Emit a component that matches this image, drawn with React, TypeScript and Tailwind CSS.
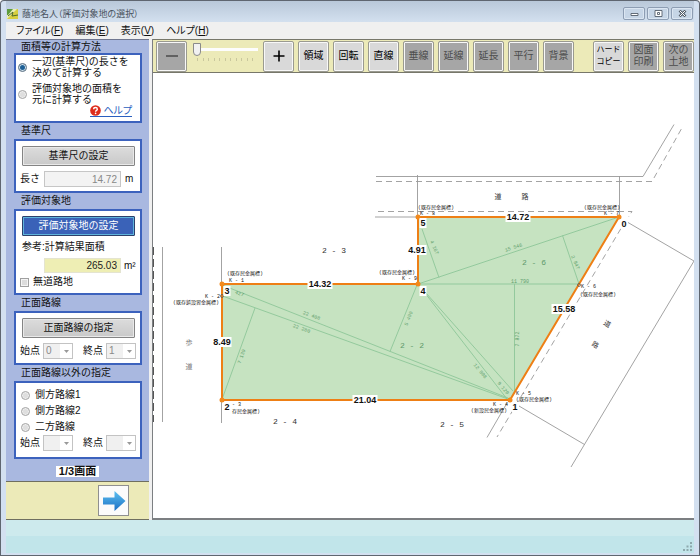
import React, { useState } from "react";

const actions = [
  { label: "領域", on: true },
  { label: "回転", on: true },
  { label: "直線", on: true },
  { label: "垂線", on: false },
  { label: "延線", on: false },
  { label: "延長", on: false },
  { label: "平行", on: false },
  { label: "背景", on: false },
];

const menus = [
  { label: "ファイル", key: "F" },
  { label: "編集", key: "E" },
  { label: "表示", key: "V" },
  { label: "ヘルプ", key: "H" },
];

function ToolButton({ on, children, className = "text-[10px]" }: { on: boolean; children: React.ReactNode; className?: string }) {
  return (
    <button
      type="button"
      disabled={!on}
      className={`flex h-[31px] w-[31px] shrink-0 items-center justify-center rounded-[2px] border border-[#9a9a90] text-center leading-[12px] shadow-[inset_0_0_0_1px_#f8f8f8] ${
        on ? "bg-[#d9d9d9] text-black" : "bg-[#a6a6a6] text-[#4c4c4c]"
      } ${className}`}
    >
      {children}
    </button>
  );
}

function Section({ title, titleClass = "h-4", boxClass, children }: { title: string; titleClass?: string; boxClass: string; children: React.ReactNode }) {
  return (
    <section className="pr-[7px] pl-2">
      <h2 className={`flex items-center pl-[7px] text-[10px] leading-none ${titleClass}`}>{title}</h2>
      <div className={`border-2 border-[#3c62bd] bg-white px-[6px] ${boxClass}`}>{children}</div>
    </section>
  );
}

function Radio({ name, checked, onChange, children, className }: { name: string; checked: boolean; onChange: () => void; children: React.ReactNode; className: string }) {
  return (
    <label className={`flex items-center ${className}`}>
      <input
        type="radio"
        name={name}
        checked={checked}
        onChange={onChange}
        className="m-0 h-[9px] w-[9px] shrink-0 appearance-none rounded-full border border-[#a8a8a8] bg-[#dedede] shadow-[inset_0_0_0_1px_#efefef] checked:border-[#7b8690] checked:bg-[#1d5f95] checked:shadow-[inset_0_0_0_1px_#d6e6f0]"
      />
      <span>{children}</span>
    </label>
  );
}

function PointSelect({ id, label, value }: { id: string; label: string; value: string }) {
  return (
    <div className="flex items-center gap-[3px]">
      <label htmlFor={id}>{label}</label>
      <span className="relative h-4 w-[30px]">
        <select
          id={id}
          disabled
          defaultValue={value}
          className="block h-4 w-[30px] appearance-none border border-[#c3c3c3] bg-[#f0f0f0] px-[2px] text-[10px] leading-none text-[#8a8a8a] opacity-100"
        >
          <option value={value}>{value}</option>
        </select>
        <span className="pointer-events-none absolute top-px right-px flex h-[14px] w-[12px] items-center justify-center bg-white">
          <svg viewBox="0 0 5 3" className="h-[3px] w-[5px]" aria-hidden="true">
            <path d="M0 0h5L2.500 3z" fill="#999" />
          </svg>
        </span>
      </span>
    </div>
  );
}

function PointRow({ id, start, end }: { id: string; start: string; end: string }) {
  return (
    <div className="-mr-[2px] -ml-[2px] flex h-4 items-center justify-between">
      <PointSelect id={`${id}-start`} label="始点" value={start} />
      <PointSelect id={`${id}-end`} label="終点" value={end} />
    </div>
  );
}

const panelButton =
  "block h-5 w-[113px] rounded-[1px] border border-[#848484] bg-linear-to-b from-[#dcdcdc] to-[#c9c9c9] text-[10px] leading-none shadow-[inset_0_0_0_1px_#e9e9e9]";

function Sidebar() {
  const [method, setMethod] = useState("length");
  const [side, setSide] = useState("");
  return (
    <aside className="flex w-[143px] shrink-0 flex-col border-t border-[#6f7690] text-[10px] leading-none text-[#111]">
      <div className="bg-[#a9b8e0]">
        <Section title="面積等の計算方法" titleClass="h-[13px]" boxClass="h-[70px] pt-px">
          <Radio name="method" checked={method === "length"} onChange={() => setMethod("length")} className="-ml-[4px] gap-[5px] leading-[11px]">
            一辺(基準尺)の長さを
            <br />
            決めて計算する
          </Radio>
          <Radio name="method" checked={method === "area"} onChange={() => setMethod("area")} className="-ml-[4px] mt-[5px] gap-[5px] leading-[11px]">
            評価対象地の面積を
            <br />
            元に計算する
          </Radio>
          <div className="flex h-3 justify-end pr-[2px]">
            <a href="#help" className="flex items-center border-b border-[#2a5fc0] text-[#2a5fc0] [font-feature-settings:'palt']">
              <svg viewBox="0 0 12 12" className="mr-[2px] h-[11px] w-[11px]" aria-hidden="true">
                <circle cx="6" cy="6" r="5.8" fill="#de2c1c" />
                <path d="M4 4.600C4 2 8 2.100 8 4.500 8 5.900 6.100 5.900 6.100 7.300" fill="none" stroke="#fff" strokeWidth="1.500" />
                <circle cx="6.100" cy="9.200" r=".9" fill="#fff" />
              </svg>
              ヘルプ
            </a>
          </div>
        </Section>

        <Section title="基準尺" boxClass="pt-[5px] pb-1">
          <button type="button" className={panelButton}>基準尺の設定</button>
          <div className="mt-[5px] -ml-[2px] flex h-4 items-center">
            <label htmlFor="length" className="w-[24px]">長さ</label>
            <input id="length" disabled defaultValue="14.72" className="h-4 w-[77px] border border-[#c6c6c6] bg-[#f3f3f3] px-[3px] text-right text-[10px] text-[#888]" />
            <span className="pl-1">m</span>
          </div>
        </Section>

        <Section title="評価対象地" boxClass="py-[5px]">
          <button type="button" className="block h-5 w-[113px] rounded-[1px] border border-[#2d3f6b] bg-[#3a62b8] text-[10px] leading-none text-white shadow-[inset_0_0_0_1px_#5fb4dc]">
            評価対象地の設定
          </button>
          <label htmlFor="area" className="mt-[3px] flex h-4 items-center">参考:計算結果面積</label>
          <div className="mt-[3px] -ml-[2px] flex h-[15px] items-center pl-[24px]">
            <input id="area" readOnly defaultValue="265.03" className="h-[15px] w-[77px] border border-[#e4e4d0] bg-[#eeeeb4] px-[3px] text-right text-[10px] text-[#222]" />
            <span className="pl-[3px]">m²</span>
          </div>
          <label className="mt-[3px] -ml-[2px] flex h-[12px] items-center gap-1">
            <input type="checkbox" className="m-0 h-[9px] w-[9px] appearance-none border border-[#a0a0a0] bg-[#dcdcdc] shadow-[inset_0_0_0_1px_#f4f4f4] checked:bg-[#3a62b8]" />
            無道路地
          </label>
        </Section>

        <Section title="正面路線" boxClass="pt-[5px] pb-1">
          <button type="button" className={panelButton}>正面路線の指定</button>
          <div className="mt-[5px]">
            <PointRow id="front" start="0" end="1" />
          </div>
        </Section>

        <Section title="正面路線以外の指定" boxClass="pt-1 pb-[6px]">
          {["側方路線1", "側方路線2", "二方路線"].map((name) => (
            <Radio key={name} name="side" checked={side === name} onChange={() => setSide(name)} className="h-4 gap-[5px] -ml-px">
              {name}
            </Radio>
          ))}
          <PointRow id="side" start="" end="" />
        </Section>

        <p className="flex justify-center pt-[7px] pb-[4px]">
          <span className="bg-white px-[3px] text-[11px] leading-[11px] font-bold">1/3画面</span>
        </p>
      </div>
      <div className="flex flex-1 items-center justify-end border-y border-[#6f6f60] bg-[#eceab8] pr-5">
        <button type="button" aria-label="次へ" className="flex h-[31px] w-[31px] items-center justify-center border border-[#8f8f8f] bg-[#fbfbfb]">
          <svg viewBox="0 0 24 22" className="h-[22px] w-6" aria-hidden="true">
            <defs>
              <linearGradient id="arrow" x1="0" y1="0" x2="0" y2="1">
                <stop offset="0" stopColor="#5cc0f0" />
                <stop offset="1" stopColor="#1b6fc4" />
              </linearGradient>
            </defs>
            <path d="M1 7.500h11.500V1L23.500 11 12.500 21v-6.500H1z" fill="url(#arrow)" />
          </svg>
        </button>
      </div>
    </aside>
  );
}

function Toolbar() {
  return (
    <div className="flex h-[34px] items-center justify-between border-y border-[#77776a] bg-[#eceab8] pl-[3px]">
      <div className="flex items-center">
        <ToolButton on={false}>
          <svg viewBox="0 0 12 12" className="h-3 w-3" role="img" aria-label="縮小">
            <path d="M0 6h12" stroke="#333" strokeWidth="1.200" />
          </svg>
        </ToolButton>
        <div className="flex h-[31px] w-[76px] flex-col items-center pt-[2px]">
          <input
            type="range"
            aria-label="倍率"
            min="0"
            max="10"
            defaultValue="0"
            className="h-[14px] w-[65px] appearance-none bg-[linear-gradient(#fdfdfd,#fdfdfd)] bg-[length:100%_3px] bg-[position:0_5px] bg-no-repeat [&::-webkit-slider-thumb]:h-[13px] [&::-webkit-slider-thumb]:w-[8px] [&::-webkit-slider-thumb]:appearance-none [&::-webkit-slider-thumb]:rounded-b-[4px] [&::-webkit-slider-thumb]:border [&::-webkit-slider-thumb]:border-[#8a8a8a] [&::-webkit-slider-thumb]:bg-[#f1f1f1]"
          />
          <svg viewBox="0 0 60 3" className="mt-px h-[3px] w-[60px]" aria-hidden="true">
            <path d="M2.500 0v3M8.500 0v3M13.500 0v3M19.500 0v3M24.500 0v3M30.500 0v3M35.500 0v3M41.500 0v3M46.500 0v3M52.500 0v3M57.500 0v3" stroke="#c9c79d" />
          </svg>
        </div>
        <div className="flex gap-1">
          <ToolButton on>
            <svg viewBox="0 0 12 12" className="h-3 w-3" role="img" aria-label="拡大">
              <path d="M6 .5v11M.5 6h11" stroke="#000" strokeWidth="1.600" />
            </svg>
          </ToolButton>
          {actions.map((a) => (
            <ToolButton key={a.label} on={a.on}>{a.label}</ToolButton>
          ))}
        </div>
      </div>
      <div className="flex gap-1">
        <ToolButton on className="text-[8px]">ハード<br />コピー</ToolButton>
        <ToolButton on={false}>図面<br />印刷</ToolButton>
        <ToolButton on={false}>次の<br />土地</ToolButton>
      </div>
    </div>
  );
}

const tiny = [
  { x: 227, y: 275, t: "(既存民金属標)" },
  { x: 229, y: 282, t: "K - 1" },
  { x: 205, y: 298, t: "K - 2" },
  { x: 173, y: 304, t: "(既存鋲設習金属標)" },
  { x: 232, y: 406, t: "- 3" },
  { x: 232, y: 413, t: "存民金属標)" },
  { x: 418, y: 209, t: "(既存民金属標)" },
  { x: 420, y: 215, t: "K - 8" },
  { x: 379, y: 274, t: "(既存民金属標)" },
  { x: 402, y: 280, t: "K - 9" },
  { x: 584, y: 209, t: "(既存民金属標)" },
  { x: 604, y: 215, t: "K - 7" },
  { x: 581, y: 288, t: "K - 6" },
  { x: 580, y: 296, t: "(既存民金属標)" },
  { x: 516, y: 395, t: "K - 5" },
  { x: 516, y: 401, t: "(既存民金属標)" },
  { x: 493, y: 406, t: "K - 4" },
  { x: 471, y: 412, t: "(新設民金属標)" },
];

const measures = [
  { x: 239, y: 295, r: 20, t: "427" },
  { x: 311, y: 317, r: 20, t: "22 408" },
  { x: 301, y: 330, r: 20, t: "22 280" },
  { x: 243, y: 357, r: -70, t: "7 139" },
  { x: 433, y: 248, r: 66, t: "4 167" },
  { x: 514, y: 249, r: -18, t: "15 546" },
  { x: 574, y: 263, r: 66, t: "2 847" },
  { x: 520, y: 283, r: 0, t: "11 790" },
  { x: 410, y: 319, r: -68, t: "5 490" },
  { x: 519, y: 339, r: -90, t: "7 872" },
  { x: 479, y: 372, r: 50, t: "12 808" },
  { x: 502, y: 389, r: 50, t: "9 120" },
];

const lots = [
  { x: 334, y: 252, t: "2 - 3" },
  { x: 285, y: 423, t: "2 - 4" },
  { x: 452, y: 426, t: "2 - 5" },
  { x: 412, y: 347, t: "2 - 2", g: true },
  { x: 534, y: 264, t: "2 - 6", g: true },
];

const badges = [
  { x: 320, y: 284, w: 25, t: "14.32" },
  { x: 518, y: 217, w: 25, t: "14.72" },
  { x: 417, y: 250, w: 19, t: "4.91" },
  { x: 222, y: 342, w: 19, t: "8.49" },
  { x: 365, y: 400, w: 25, t: "21.04" },
  { x: 564, y: 309, w: 25, t: "15.58" },
  { x: 227, y: 291, w: 7, t: "3" },
  { x: 227, y: 407, w: 7, t: "2" },
  { x: 423, y: 223, w: 7, t: "5" },
  { x: 423, y: 291, w: 7, t: "4" },
  { x: 624, y: 224, w: 7, t: "0" },
  { x: 515, y: 407, w: 7, t: "1" },
];

const corners = [[619, 217], [510, 400], [222, 400], [222, 284], [418, 284], [418, 217]];

function LandPlan() {
  return (
    <svg viewBox="153 73 541 445" className="block h-auto w-full" role="img" aria-label="評価対象地の図面">
      <path d="M153.500 247V422" stroke="#555" strokeDasharray="8 4" />
      <path d="M162.500 247V422M221.500 247V423M376 176.500H643L674 124.500M417.500 175V217M619.500 176V217M375 217H418M628 222.500 694 261 571 467M519 406 584.500 444.500M507 403 487 437.500" fill="none" stroke="#999" strokeWidth=".9" />
      <path d="M376 181.500H652L683 126M378 211.500H632L628.500 217M626 220 497 437" fill="none" stroke="#999" strokeWidth=".9" strokeDasharray="6 4" />
      <g fontFamily="'Noto Sans CJK JP', sans-serif" fontSize="7" fill="#333" textAnchor="middle">
        <text x="498" y="199">道</text>
        <text x="525" y="199">路</text>
        <text x="189" y="345" fill="#777">歩</text>
        <text x="189" y="369" fill="#777">道</text>
        <text transform="translate(606 326) rotate(30)">道</text>
        <text transform="translate(594 347) rotate(30)">路</text>
      </g>
      <path d="M619 217 510 400H222V284H418V217Z" fill="#c6e3c1" />
      <path
        d="M222.500 296 508 399M222 285 508 398M255 308 222.500 398M418 284 507 399M418 284 513 391M418 284 619 217M418 284H579M514.500 284V391L510 400M422 229 439 277.500M417 285 390 351.500M562.500 235.500 579 284"
        fill="none"
        stroke="#8dc698"
        strokeWidth=".9"
      />
      <g fontFamily="'Liberation Mono', monospace" fontSize="5" fill="#5fa06d" textAnchor="middle">
        {measures.map((m) => (
          <text key={m.t} transform={`translate(${m.x} ${m.y}) rotate(${m.r})`}>{m.t}</text>
        ))}
      </g>
      <g fontFamily="'Liberation Mono', monospace" fontSize="8" textAnchor="middle">
        {lots.map((l) => (
          <text key={l.t} x={l.x} y={l.y + 1} fill={l.g ? "#5f9a6c" : "#333"}>{l.t}</text>
        ))}
      </g>
      <path d="M619 217 510 400H222V284H418V217Z" fill="none" stroke="#ee7f15" strokeWidth="2" />
      {corners.map(([x, y]) => (
        <circle key={`${x}-${y}`} cx={x} cy={y} r="2.500" fill="#f28a1c" />
      ))}
      <circle cx="579" cy="285" r="1.500" fill="none" stroke="#555" strokeWidth=".7" />
      <circle cx="222" cy="296" r="1.500" fill="none" stroke="#555" strokeWidth=".7" />
      <g fontFamily="'Liberation Mono', 'Noto Sans CJK JP', monospace" fontSize="5" fill="#111">
        {tiny.map((t) => (
          <text key={`${t.x}-${t.y}`} x={t.x} y={t.y}>{t.t}</text>
        ))}
      </g>
      <g fontFamily="'Liberation Sans', sans-serif" fontSize="9" fontWeight="bold" fill="#111" textAnchor="middle">
        {badges.map((b) => (
          <g key={b.t}>
            <rect x={b.x - b.w / 2} y={b.y - 5} width={b.w} height="10" fill="#fff" />
            <text x={b.x} y={b.y + 3}>{b.t}</text>
          </g>
        ))}
      </g>
    </svg>
  );
}

function TitleBar() {
  const control = "flex h-[13px] w-[22px] items-center justify-center rounded-[2px] border border-[#8d9db3] bg-[#c6d5e6] shadow-[inset_0_0_0_1px_#dbe6f2]";
  return (
    <header className="flex h-[21px] items-center justify-between bg-linear-to-b from-[#b9c8d9] to-[#d3e0ef] pr-px pl-px">
      <div className="flex items-center gap-[3px] pt-[5px]">
        <svg viewBox="0 0 12 12" className="h-3 w-3" aria-hidden="true">
          <path d="M0 1h11v10H0z" fill="#e9efb4" />
          <path d="M0 1h6L1 7H0z" fill="#5d9b3d" />
          <path d="M0 11 10 1h1v10z" fill="#d6ce3f" />
          <path d="M1 8 6 4l-1 4 6-1" fill="none" stroke="#4b6a2a" strokeWidth="1" />
        </svg>
        <h1 className="text-[9px] leading-none text-[#4a545f] [font-feature-settings:'palt']">蔭地名人（評価対象地の選択）</h1>
      </div>
      <div className="flex gap-[2px] pt-[4px]">
        <button type="button" aria-label="最小化" className={control}>
          <svg viewBox="0 0 9 7" className="h-[7px] w-[9px]"><path d="M1 3.500h7v2H1z" fill="#fff" stroke="#555f6b" strokeWidth=".9" /></svg>
        </button>
        <button type="button" aria-label="最大化" className={control}>
          <svg viewBox="0 0 9 7" className="h-[7px] w-[9px]"><path d="M1 .5h7v6H1zM3.500 2.500h2v2h-2z" fill="#fff" stroke="#555f6b" strokeWidth=".9" /></svg>
        </button>
        <button type="button" aria-label="閉じる" className={control}>
          <svg viewBox="0 0 9 7" className="h-[7px] w-[9px]"><path d="m1.500 .5 6 6m0-6-6 6" stroke="#555f6b" strokeWidth="2.600" /><path d="m1.800 .8 5.400 5.400m0-5.400-5.400 5.400" stroke="#fff" strokeWidth="1" /></svg>
        </button>
      </div>
    </header>
  );
}

export default function App() {
  return (
    <div className="flex min-h-screen flex-col rounded-t-[4px] border-x border-t border-b-2 border-[#5f6670] bg-[#d3e0f0] px-[5px] pb-[2px] font-['Liberation_Sans','Noto_Sans_CJK_JP',sans-serif]">
      <TitleBar />
      <nav className="flex h-[17px] items-center gap-3 bg-[#f0f0f0] pl-[10px] text-[10px] leading-none text-[#111] [font-feature-settings:'palt']">
        {menus.map((m) => (
          <button key={m.key} type="button">
            {m.label}(<u>{m.key}</u>)
          </button>
        ))}
      </nav>
      <div className="flex flex-1 gap-[3px] bg-[#f0f0f0]">
        <Sidebar />
        <main className="flex min-w-0 flex-1 flex-col border-b-2 border-l border-[#7c7f82] bg-white">
          <Toolbar />
          <LandPlan />
        </main>
      </div>
      <footer>
        <div className="h-4 bg-[#cdeaed]" />
        <div className="flex h-[17px] items-end justify-end bg-[#c1e5ea] p-[2px]">
          <svg viewBox="0 0 9 9" className="h-[9px] w-[9px]" aria-hidden="true">
            <path d="M7 0h2v2H7zM7 3.500h2v2H7zM3.500 3.500h2v2h-2zM7 7h2v2H7zM3.500 7h2v2h-2zM0 7h2v2H0z" fill="#8ea9ad" />
          </svg>
        </div>
      </footer>
    </div>
  );
}
